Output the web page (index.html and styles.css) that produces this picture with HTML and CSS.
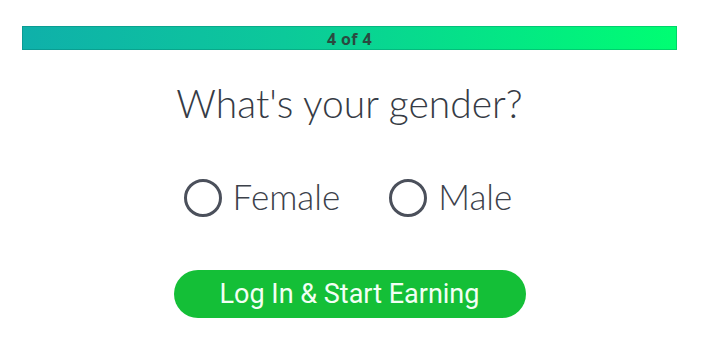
FILE: index.html
```html
<!DOCTYPE html>
<html>
<head>
<meta charset="utf-8">
<link rel="stylesheet" href="styles.css">
</head>
<body>
<div class="wrap">
  <div class="progress"><span class="progress-label">4 of 4</span></div>
  <h1 class="question">What's your gender?</h1>
  <div class="options">
    <label class="option"><span class="radio"></span><span class="option-text">Female</span></label>
    <label class="option"><span class="radio"></span><span class="option-text">Male</span></label>
  </div>
  <div class="actions">
    <button class="cta"><span class="cta-text">Log In &amp; Start Earning</span></button>
  </div>
</div>
</body>
</html>
```
FILE: styles.css
```css
html, body {
  margin: 0;
  padding: 0;
  background: #fff;
}
.wrap {
  width: 655px;
  margin-left: 22px;
  padding-top: 26px;
  display: flex;
  flex-direction: column;
  align-items: center;
}
.progress {
  width: 100%;
  height: 24px;
  box-sizing: border-box;
  background: linear-gradient(90deg, #0fb0aa 0%, #0cc99a 40%, #03e884 75%, #00fe72 100%);
  box-shadow: inset 0 0 0 1px rgba(0, 90, 80, 0.25);
  display: flex;
  align-items: center;
  justify-content: center;
}
.progress-label {
  font-family: "Open Sans", sans-serif;
  font-weight: 700;
  font-size: 16px;
  letter-spacing: 0.4px;
  color: #2a4a40;
  line-height: 24px;
  padding-top: 1px;
}
.question {
  margin: 30px 0 0;
  font-family: Lato, sans-serif;
  font-weight: 300;
  font-size: 39px;
  line-height: 46px;
  color: #363b45;
}
.options {
  margin-top: 53px;
  padding-right: 3px;
  display: flex;
  gap: 49px;
  align-items: center;
}
.option {
  display: flex;
  align-items: center;
  gap: 11px;
}
.radio {
  width: 38px;
  height: 38px;
  box-sizing: border-box;
  border: 3px solid #4b505b;
  border-radius: 50%;
}
.option-text {
  margin-top: -5px;
  font-family: Lato, sans-serif;
  font-weight: 300;
  font-size: 35px;
  line-height: 40px;
  color: #3c414a;
}
.actions {
  margin-top: 53px;
}
.cta {
  width: 352px;
  height: 48px;
  border: none;
  border-radius: 24px;
  background: #14bf37;
  display: flex;
  align-items: center;
  justify-content: center;
  padding: 0;
}
.cta-text {
  font-family: Roboto, sans-serif;
  font-weight: 400;
  font-size: 27px;
  color: #f2fff4;
  white-space: nowrap;
}
```
